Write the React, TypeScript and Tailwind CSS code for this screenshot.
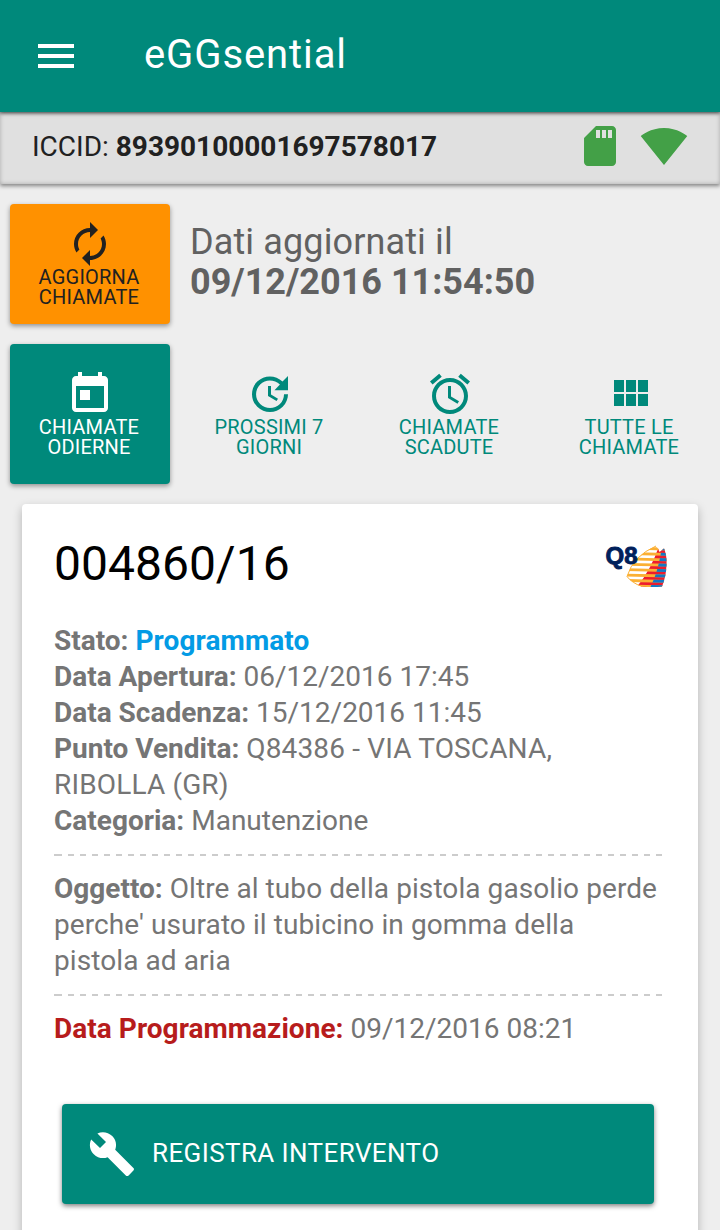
import type { ReactNode } from "react";

interface IconProps {
  path: string;
}

function Icon({ path }: IconProps) {
  return (
    <svg viewBox="0 0 24 24" className="size-12 shrink-0" fill="currentColor" aria-hidden="true">
      <path d={path} />
    </svg>
  );
}

const icons = {
  menu: "M3 18h18v-2H3v2zm0-5h18v-2H3v2zm0-7v2h18V6H3z",
  sdCard:
    "M18 2h-8L4.02 8 4 20c0 1.1.9 2 2 2h12c1.1 0 2-.9 2-2V4c0-1.1-.9-2-2-2zm-6 6h-2V4h2v4zm3 0h-2V4h2v4zm3 0h-2V4h2v4z",
  wifi: "M12.01 21.49L23.64 7c-.45-.34-4.93-4-11.64-4C5.28 3 .81 6.66.36 7l11.63 14.49.01.01.01-.01z",
  autorenew:
    "M12 6v3l4-4-4-4v3c-4.42 0-8 3.58-8 8 0 1.57.46 3.03 1.24 4.26L6.7 14.8c-.45-.83-.7-1.79-.7-2.8 0-3.31 2.69-6 6-6zm6.76 1.74L17.3 9.2c.44.84.7 1.79.7 2.8 0 3.31-2.69 6-6 6v-3l-4 4 4 4v-3c4.42 0 8-3.58 8-8 0-1.57-.46-3.03-1.24-4.26z",
  today:
    "M19 3h-1V1h-2v2H8V1H6v2H5c-1.11 0-1.99.9-1.99 2L3 19c0 1.1.89 2 2 2h14c1.1 0 2-.9 2-2V5c0-1.1-.9-2-2-2zm0 16H5V8h14v11zM7 10h5v5H7z",
  update:
    "M21 10.12h-6.78l2.74-2.82c-2.73-2.7-7.15-2.8-9.88-.1-2.73 2.71-2.73 7.08 0 9.79 2.73 2.71 7.15 2.71 9.88 0C18.32 15.65 19 14.08 19 12.1h2c0 1.98-.88 4.55-2.64 6.29-3.51 3.48-9.21 3.48-12.72 0-3.5-3.47-3.53-9.11-.02-12.58 3.51-3.47 9.14-3.47 12.65 0L21 3v7.12zM12.5 8v4.25l3.5 2.08-.72 1.21L11 13V8h1.5z",
  alarm:
    "M22 5.72l-4.6-3.86-1.29 1.53 4.6 3.86L22 5.72zM7.88 3.39L6.6 1.86 2 5.71l1.29 1.53 4.59-3.85zM12.5 8H11v6l4.75 2.85.75-1.23-4-2.37V8zM12 4c-4.97 0-9 4.03-9 9s4.02 9 9 9c4.97 0 9-4.03 9-9s-4.03-9-9-9zm0 16c-3.87 0-7-3.13-7-7s3.13-7 7-7 7 3.13 7 7-3.13 7-7 7z",
  viewModule: "M4 11h5V5H4v6zm0 7h5v-6H4v6zm6 0h5v-6h-5v6zm6 0h5v-6h-5v6zm-6-7h5V5h-5v6zm6-6v6h5V5h-5z",
  build:
    "M22.7 19l-9.1-9.1c.9-2.3.4-5-1.5-6.9-2-2-5-2.4-7.4-1.3L9 6 6 9 1.6 4.7C.4 7.1.9 10.1 2.9 12.1c1.9 1.9 4.6 2.4 6.9 1.5l9.1 9.1c.4.4 1 .4 1.4 0l2.3-2.3c.5-.4.5-1.1.1-1.4z",
};

interface Filter {
  icon: string;
  lines: [string, string];
  active?: boolean;
}

const filters: Filter[] = [
  { icon: icons.today, lines: ["CHIAMATE", "ODIERNE"], active: true },
  { icon: icons.update, lines: ["PROSSIMI 7", "GIORNI"] },
  { icon: icons.alarm, lines: ["CHIAMATE", "SCADUTE"] },
  { icon: icons.viewModule, lines: ["TUTTE LE", "CHIAMATE"] },
];

function TileLabel({ lines }: { lines: [string, string] }) {
  return (
    <span className="-mt-px mb-px -ml-0.5 text-center text-[20px] leading-5 tracking-[0.2px]">
      {lines[0]}
      <br />
      {lines[1]}
    </span>
  );
}

function Field({ label, children }: { label: string; children: ReactNode }) {
  return (
    <p>
      <b>{label}</b> {children}
    </p>
  );
}

function Divider() {
  return (
    <div className="my-[15px] flex h-0.5">
      <div className="w-0.5 bg-[#ccc]" />
      <div className="grow bg-[repeating-linear-gradient(90deg,#ccc_0_6px,transparent_6px_12px)]" />
    </div>
  );
}

const stripes = [4.5, 9.9, 15.3, 20.7, 26.1, 31.5, 36.9, 42.3];

function Q8Logo() {
  return (
    <svg viewBox="0 0 62 44" className="mt-2 -mr-1.5 h-11 w-[62px] shrink-0 overflow-visible" role="img" aria-label="Q8">
      <defs>
        <clipPath id="sail">
          <path d="M50 2Q53 5 53.5 8L58 4.5Q61 11 60.5 21Q60 33 56 42.5Q47 43.5 36 42.5Q26 39 21 32.5Q27 12 50 2z" />
        </clipPath>
        <clipPath id="sail-right">
          <path d="M56 2Q53 26 44 44H62V2z" />
        </clipPath>
      </defs>
      <g clipPath="url(#sail)">
        <rect width="62" height="44" fill="#fff" />
        <path d="M53 2Q45 26 30 44H62V2z" fill="#ed1c2e" />
        {stripes.map((y) => (
          <path key={y} d={`M16 ${y - 0.5}L62 ${y + 0.5}`} stroke="#fbb034" strokeWidth="2.8" />
        ))}
        <g clipPath="url(#sail-right)">
          {stripes.map((y) => (
            <path key={y} d={`M16 ${y - 0.5}L62 ${y + 0.5}`} stroke="#1477c6" strokeWidth="2.9" />
          ))}
        </g>
      </g>
      <path d="M50 2Q27 12 21 32.5Q26 39 36 42.5" fill="none" stroke="#fbb034" strokeWidth="1" />
      <text
        x="-0.5"
        y="19.5"
        fontSize="24"
        fontWeight="700"
        fill="#00205b"
        stroke="#00205b"
        strokeWidth="0.9"
        className="font-['Liberation_Sans',sans-serif]"
      >
        Q8
      </text>
    </svg>
  );
}

export default function App() {
  return (
    <div className="h-[1230px] w-[720px] overflow-hidden bg-[#eee] font-['Roboto','Liberation_Sans',sans-serif]">
      <header className="relative z-10 flex h-28 items-center bg-[#00897b] px-8 text-white shadow-[0_1px_4px_rgba(0,0,0,0.7)]">
        <Icon path={icons.menu} />
        <h1 className="-mt-0.5 ml-16 text-[40px] leading-none tracking-[0.9px]">eGGsential</h1>
      </header>

      <section className="flex h-[72px] items-center justify-between bg-[#e0e0e0] px-8 pb-1 text-[28px] text-[#212121] shadow-[0_2px_4px_rgba(0,0,0,0.45),inset_0_0_4px_rgba(0,0,0,0.25)]">
        <p className="pt-px">
          ICCID: <b>89390100001697578017</b>
        </p>
        <div className="flex gap-4 text-[#43a047]">
          <Icon path={icons.sdCard} />
          <Icon path={icons.wifi} />
        </div>
      </section>

      <section className="mt-5 flex px-2.5">
        <button className="flex h-[120px] w-40 flex-col items-center justify-center rounded bg-[#ff9100] text-[#212121] shadow-[0_2px_5px_rgba(0,0,0,0.4)]">
          <Icon path={icons.autorenew} />
          <TileLabel lines={["AGGIORNA", "CHIAMATE"]} />
        </button>
        <p className="ml-5 pt-[18px] text-[36px] leading-10 text-[#616161]">
          <span className="tracking-[0.12px]">Dati aggiornati il</span>
          <br />
          <b>09/12/2016 11:54:50</b>
        </p>
      </section>

      <nav className="mt-5 flex gap-5 px-2.5">
        {filters.map((filter, index) => (
          <button
            key={index}
            className={
              filter.active
                ? "flex h-[140px] w-40 flex-col items-center justify-center rounded bg-[#00897b] text-white shadow-[0_2px_5px_rgba(0,0,0,0.4)]"
                : "flex h-[140px] w-40 flex-col items-center justify-center text-[#00897b]"
            }
          >
            <Icon path={filter.icon} />
            <TileLabel lines={filter.lines} />
          </button>
        ))}
      </nav>

      <article className="mx-[22px] mt-5 h-[760px] rounded bg-white pt-8 pr-9 pl-8 text-[28px] leading-9 text-[#757575] shadow-[0_4px_10px_rgba(0,0,0,0.25)]">
        <div className="flex h-[87px] justify-between">
          <h2 className="text-[48px] leading-[56px] text-black">004860/16</h2>
          <Q8Logo />
        </div>
        <Field label="Stato:">
          <b className="tracking-[0.1px] text-[#039be5]">Programmato</b>
        </Field>
        <Field label="Data Apertura:">06/12/2016 17:45</Field>
        <Field label="Data Scadenza:">15/12/2016 11:45</Field>
        <Field label="Punto Vendita:">
          <span className="tracking-[0.15px]">Q84386 - VIA TOSCANA, RIBOLLA (GR)</span>
        </Field>
        <Field label="Categoria:">Manutenzione</Field>
        <Divider />
        <Field label="Oggetto:">
          <span className="tracking-[0.08px]">
            Oltre al tubo della pistola gasolio perde perche' usurato il tubicino in gomma della
            <br />
            pistola ad aria
          </span>
        </Field>
        <Divider />
        <p>
          <b className="tracking-[0.04px] text-[#b71c1c]">Data Programmazione:</b> 09/12/2016 08:21
        </p>
        <button className="mt-[57px] ml-2 flex h-[100px] w-[592px] items-center rounded bg-[#00897b] pl-[26px] text-[26px] text-white shadow-[0_2px_5px_rgba(0,0,0,0.5)]">
          <Icon path={icons.build} />
          <span className="-mt-[3px] ml-4 tracking-[0.4px]">REGISTRA INTERVENTO</span>
        </button>
      </article>
    </div>
  );
}
